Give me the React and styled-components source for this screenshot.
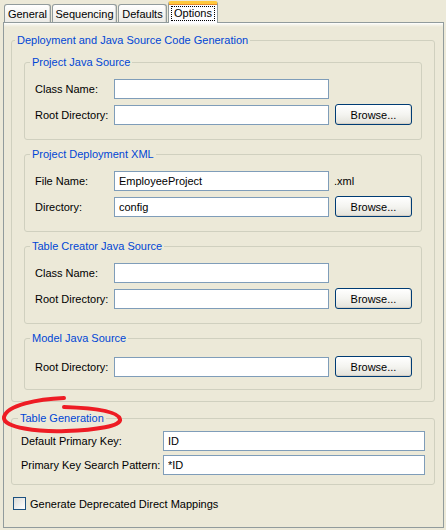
import React from "react";
import styled, { createGlobalStyle } from "styled-components";

const GlobalStyle = createGlobalStyle`
  body {
    margin: 0;
    background: #ECE9D8;
  }
`;

const Window = styled.div`
  position: relative;
  width: 446px;
  height: 530px;
  overflow: hidden;
  background: #ECE9D8;
  font-family: "Liberation Sans", Arial, sans-serif;
  font-size: 11px;
  color: #000;
`;

// --- tabs ---

const TabStrip = styled.div`
  display: flex;
  align-items: flex-end;
  gap: 1px;
  height: 22px;
  padding-left: 4px;
`;

const Tab = styled.div`
  position: relative;
  z-index: ${(p) => (p.$active ? 1 : 0)};
  box-sizing: border-box;
  display: flex;
  align-items: center;
  justify-content: center;
  width: ${(p) => p.$w}px;
  height: ${(p) => (p.$active ? 22 : 18)}px;
  margin-bottom: ${(p) => (p.$active ? -1 : 0)}px;
  border: 1px solid #919B9C;
  border-bottom: none;
  border-top: ${(p) => (p.$active ? "3px solid #FFC83C" : "1px solid #919B9C")};
  border-radius: 3px 3px 0 0;
  background: ${(p) =>
    p.$active
      ? "#FCFCFE"
      : "linear-gradient(#FFFFFF, #F3F3EF 60%, #ECEBE6)"};
  box-shadow: ${(p) => (p.$active ? "inset 0 1px 0 #E68B2C" : "inset -1px 0 0 #D8D7D0")};
  padding-bottom: ${(p) => (p.$active ? 1 : 0)}px;
`;

const Focus = styled.span`
  outline: 1px dotted #000;
  padding: 0 2px;
  line-height: 13px;
`;

// --- panel and groups ---

const Panel = styled.div`
  box-sizing: border-box;
  width: 441px;
  height: 506px;
  margin-left: 3px;
  border: 1px solid #919B9C;
  background: linear-gradient(#FFFFFF 0, #F4F2E8 2px, #ECE9D8 4px);
  display: flex;
  flex-direction: column;
  padding: 11px 8px 0 7px;
`;

const Group = styled.fieldset`
  margin: ${(p) => p.$margin || "0"};
  padding: ${(p) => p.$pad};
  border: 1px solid #D0D0BF;
  border-radius: 3px;
  min-width: 0;
  display: flex;
  flex-direction: column;
  gap: ${(p) => p.$gap || 0}px;
`;

const Legend = styled.legend`
  color: #0046D5;
  padding: 0 2px;
  margin-left: ${(p) => p.$shift}px;
  line-height: 13px;
`;

const Rows = styled.div`
  display: flex;
  flex-direction: column;
  gap: ${(p) => p.$gap}px;
`;

const Row = styled.div`
  display: grid;
  grid-template-columns: ${(p) => p.$label}px ${(p) => p.$input}px auto;
  align-items: center;
  min-height: ${(p) => p.$h}px;
`;

const Label = styled.label`
  white-space: nowrap;
`;

const Input = styled.input`
  box-sizing: border-box;
  width: 100%;
  height: 20px;
  margin: 0;
  padding: 0 4px;
  border: 1px solid #7F9DB9;
  background: #fff;
  font: inherit;
  color: #000;
  outline: none;
`;

const Suffix = styled.span`
  margin-left: 5px;
`;

const Button = styled.button`
  box-sizing: border-box;
  width: 77px;
  height: 21px;
  margin: 0 0 0 6px;
  padding: 0;
  border: 1px solid #003C74;
  border-radius: 3px;
  background: linear-gradient(#FFFFFF, #F4F4F0 50%, #E3E2DA);
  box-shadow: inset 0 -1px 0 #D6D0C5, inset -1px 0 0 #E3E0D6;
  font: inherit;
  color: #000;
`;

const CheckRow = styled.label`
  display: flex;
  align-items: center;
  gap: 4px;
  margin: 12px 0 0 2px;
`;

const Box = styled.span`
  box-sizing: border-box;
  width: 13px;
  height: 13px;
  border: 1px solid #1C5180;
  background: linear-gradient(135deg, #DCDCD7, #FFFFFF);
`;

// hand-drawn red ring round the Table Generation heading
const Mark = styled.svg`
  position: absolute;
  left: 0;
  top: 394px;
  pointer-events: none;
`;

const sections = [
  {
    title: "Project Java Source",
    pad: "9px 10px 14px 10px",
    rows: [
      { label: "Class Name:", value: "" },
      { label: "Root Directory:", value: "", browse: true },
    ],
  },
  {
    title: "Project Deployment XML",
    pad: "9px 10px 14px 10px",
    rows: [
      { label: "File Name:", value: "EmployeeProject", suffix: ".xml" },
      { label: "Directory:", value: "config", browse: true },
    ],
  },
  {
    title: "Table Creator Java Source",
    pad: "9px 10px 14px 10px",
    rows: [
      { label: "Class Name:", value: "" },
      { label: "Root Directory:", value: "", browse: true },
    ],
  },
  {
    title: "Model Java Source",
    pad: "11px 10px 12px 10px",
    rows: [{ label: "Root Directory:", value: "", browse: true }],
  },
];

const tabs = [
  { name: "General", w: 47 },
  { name: "Sequencing", w: 65 },
  { name: "Defaults", w: 49 },
  { name: "Options", w: 50, active: true },
];

export default function App() {
  return (
    <Window>
      <GlobalStyle />
      <TabStrip>
        {tabs.map((t) => (
          <Tab key={t.name} $w={t.w} $active={t.active}>
            {t.active ? <Focus>{t.name}</Focus> : t.name}
          </Tab>
        ))}
      </TabStrip>

      <Panel>
        <Group $pad="9px 12px 11px 12px" $gap={8}>
          <Legend $shift={-9}>Deployment and Java Source Code Generation</Legend>
          {sections.map((s) => (
            <Group key={s.title} $pad={s.pad}>
              <Legend $shift={-5}>{s.title}</Legend>
              <Rows $gap={5}>
                {s.rows.map((r) => (
                  <Row key={r.label} $label={79} $input={215} $h={21}>
                    <Label>{r.label}</Label>
                    <Input defaultValue={r.value} />
                    {r.suffix && <Suffix>{r.suffix}</Suffix>}
                    {r.browse && <Button>Browse...</Button>}
                  </Row>
                ))}
              </Rows>
            </Group>
          ))}
        </Group>

        <Group $margin="10px 0 0 0" $pad="6px 9px 9px 9px">
          <Legend $shift={-3}>Table Generation</Legend>
          <Rows $gap={4}>
            <Row $label={142} $input={262} $h={20}>
              <Label>Default Primary Key:</Label>
              <Input defaultValue="ID" />
            </Row>
            <Row $label={142} $input={262} $h={20}>
              <Label>Primary Key Search Pattern:</Label>
              <Input defaultValue="*ID" />
            </Row>
          </Rows>
        </Group>

        <CheckRow>
          <Box />
          Generate Deprecated Direct Mappings
        </CheckRow>
      </Panel>

      <Mark width="126" height="42" viewBox="0 394 126 42">
        <path
          d="M64 398 C38 399, 7 405, 4 417 C2 428, 40 432, 66 431 C96 430, 122 426, 120 419 C118 411, 92 408, 64 407"
          fill="none"
          stroke="#EE1C24"
          strokeWidth="4"
          strokeLinecap="round"
        />
      </Mark>
    </Window>
  );
}
